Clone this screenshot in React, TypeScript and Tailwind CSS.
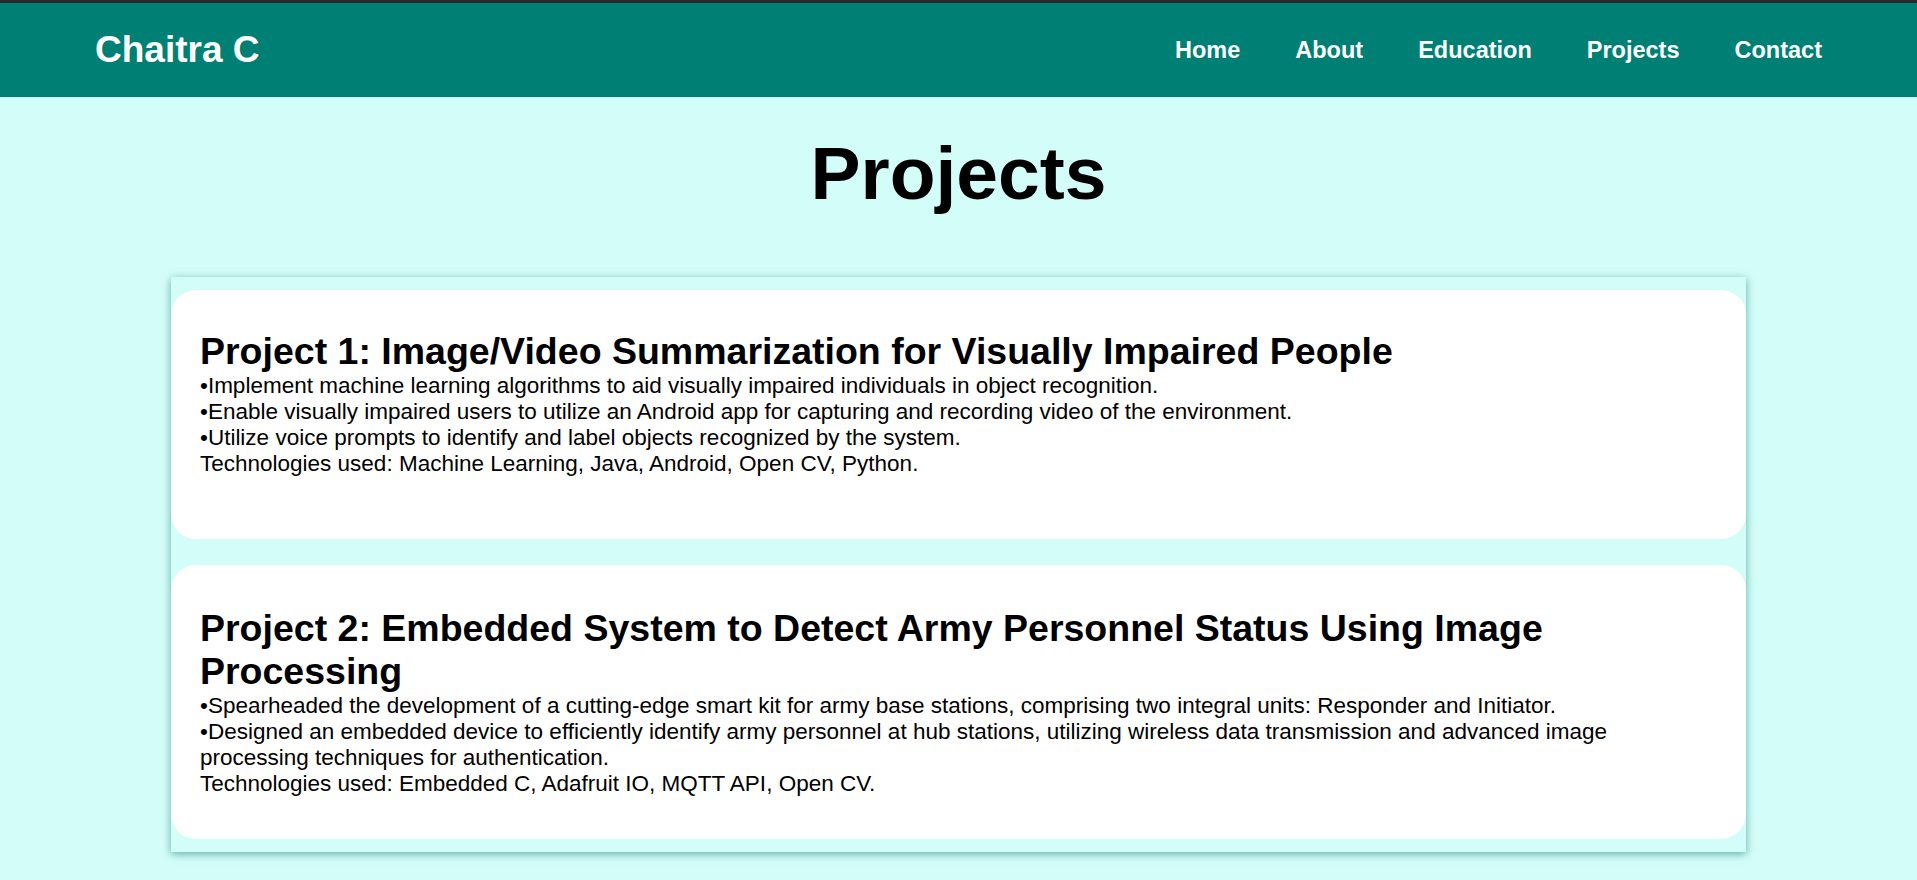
const links = ["Home", "About", "Education", "Projects", "Contact"];

const projects = [
    {
        title: "Project 1: Image/Video Summarization for Visually Impaired People",
        lines: [
            "•Implement machine learning algorithms to aid visually impaired individuals in object recognition.",
            "•Enable visually impaired users to utilize an Android app for capturing and recording video of the environment.",
            "•Utilize voice prompts to identify and label objects recognized by the system.",
            "Technologies used: Machine Learning, Java, Android, Open CV, Python.",
        ],
        pad: "pt-[40px] pb-[62px]",
    },
    {
        title: "Project 2: Embedded System to Detect Army Personnel Status Using Image Processing",
        lines: [
            "•Spearheaded the development of a cutting-edge smart kit for army base stations, comprising two integral units: Responder and Initiator.",
            "•Designed an embedded device to efficiently identify army personnel at hub stations, utilizing wireless data transmission and advanced image processing techniques for authentication.",
            "Technologies used: Embedded C, Adafruit IO, MQTT API, Open CV.",
        ],
        pad: "pt-[42px] pb-[42px]",
    },
];

function Header() {
    return (
        <header className="h-[97px] border-t-[3px] border-[#262a2b] bg-[#008074] px-[95px] flex items-center justify-between text-white">
            <div className="text-[37px] font-bold leading-[1.15]">Chaitra C</div>
            <nav className="flex items-center gap-[55px] pt-[2px]">
                {links.map((l) => (
                    <a key={l} href="#" className="text-[23.5px] font-bold leading-[1.15]">
                        {l}
                    </a>
                ))}
            </nav>
        </header>
    );
}

function ProjectCard({ title, lines, pad }: { title: string; lines: string[]; pad: string }) {
    return (
        <div className={`bg-white rounded-[25px] pl-[29px] pr-[40px] ${pad}`}>
            <h2 className="text-[37.5px] font-bold leading-[1.15]">{title}</h2>
            <div className="text-[22.5px] leading-[1.15]">
                {lines.map((t, i) => (
                    <div key={i}>{t}</div>
                ))}
            </div>
        </div>
    );
}

export default function App() {
    return (
        <div className="min-h-screen bg-[#d3fdf9] text-black font-['Liberation_Sans',Arial,sans-serif]">
            <Header />
            <main className="pt-[33px] pb-[29px]">
                <h1 className="text-[75px] font-bold leading-[1.15] text-center mb-[61px]">Projects</h1>
                <section className="w-[1575px] mx-auto py-[13px] flex flex-col gap-[26px] shadow-[0_2px_8px_rgba(0,110,100,0.55)]">
                    {projects.map((p) => (
                        <ProjectCard key={p.title} {...p} />
                    ))}
                </section>
            </main>
        </div>
    );
}
